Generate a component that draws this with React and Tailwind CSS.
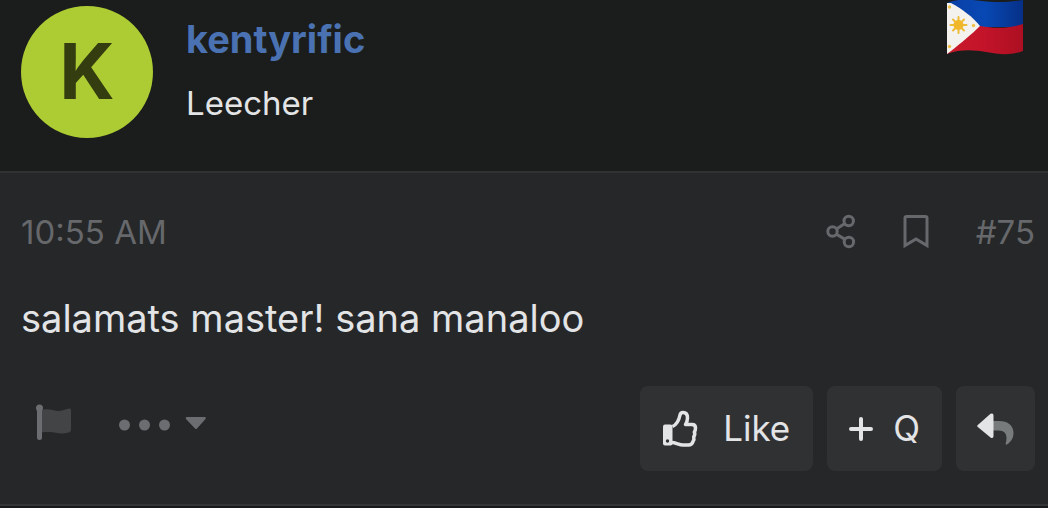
function PhilippineFlag() {
  return (
    <svg viewBox="0 0 78 56" className="h-14 w-[78px] shrink-0" role="img" aria-label="Philippines">
      <defs>
        <linearGradient id="flag-blue" x1="0" x2="1" y1="0" y2="0">
          <stop offset="0" stopColor="#0a3fa5" />
          <stop offset="0.5" stopColor="#0848b4" />
          <stop offset="1" stopColor="#063087" />
        </linearGradient>
        <linearGradient id="flag-red" x1="0" x2="1" y1="0" y2="0">
          <stop offset="0" stopColor="#c91a2a" />
          <stop offset="0.45" stopColor="#c4142a" />
          <stop offset="1" stopColor="#ad0f22" />
        </linearGradient>
      </defs>
      <path d="M1 3C10 -1 20 -1 36 1S64 2 77 0V27H1Z" fill="url(#flag-blue)" />
      <path d="M1 27L34 26C50 29 64 28 77 24V51C64 56 52 54 40 52S14 49 1 54Z" fill="url(#flag-red)" />
      <path d="M1 3L5 3C16 9 27 17 34 26C26 34 15 43 5 51L1 54Z" fill="#f4f2ee" />
      <path d="M12.500 17V33M4.500 25H20.500M7 19.500L18 30.500M18 19.500L7 30.500" stroke="#eebb35" strokeWidth="2" strokeLinecap="round" />
      <circle cx="12.500" cy="25" r="5" fill="#f0b72b" />
      <circle cx="3.500" cy="7" r="1.700" fill="#efc04a" />
      <circle cx="3.500" cy="46.500" r="1.700" fill="#efc04a" />
      <circle cx="27.500" cy="25.500" r="1.700" fill="#efc04a" />
    </svg>
  );
}

function ShareIcon() {
  return (
    <svg viewBox="0 0 32 36" className="h-9 w-8" fill="none" stroke="currentColor" strokeWidth="3" aria-hidden="true">
      <circle cx="7.500" cy="17.500" r="4.700" />
      <circle cx="23.700" cy="7" r="4.700" />
      <circle cx="23.900" cy="28" r="4.700" />
      <path d="M11.500 15L19.800 9.600M11.500 20.200L20 25.400" />
    </svg>
  );
}

function BookmarkIcon() {
  return (
    <svg viewBox="0 0 26 36" className="h-9 w-[26px]" fill="none" stroke="currentColor" strokeWidth="3" aria-hidden="true">
      <path d="M2 31.500V4Q2 2.500 3.500 2.500H22.500Q24 2.500 24 4V31.500L13 25Z" />
    </svg>
  );
}

function FlagIcon() {
  return (
    <svg viewBox="0 0 36 38" className="h-[38px] w-9" aria-hidden="true">
      <path d="M5 6.500C13 3 19 8.500 26 6.500L33 4.500Q35 4 35 6V26Q35 28 32 28.800C22 31 19 26.500 5 28.500Z" fill="#434446" />
      <path d="M3.500 5V33.500" stroke="#6b6d70" strokeWidth="5" strokeLinecap="round" />
      <circle cx="3.500" cy="4" r="3.500" fill="#6b6d70" />
    </svg>
  );
}

function MoreIcon() {
  return (
    <svg viewBox="0 0 90 16" className="h-4 w-[90px]" fill="currentColor" aria-hidden="true">
      <circle cx="6.500" cy="9" r="5.500" />
      <circle cx="26.500" cy="9" r="5.500" />
      <circle cx="46.500" cy="9" r="5.500" />
      <path d="M68.500 1H87Q88.500 1.500 87.500 3L79 12.500Q78 13.500 77 12.500L68 3Q67.200 1.500 68.500 1Z" />
    </svg>
  );
}

function ThumbIcon() {
  return (
    <svg viewBox="0 0 36 38" className="h-[38px] w-9" aria-hidden="true">
      <rect x="0" y="14.500" width="9.500" height="21" rx="2" fill="currentColor" />
      <circle cx="4.500" cy="31" r="1.700" fill="#303133" />
      <path
        d="M9.500 16.500C14 14.500 16 10 17 5Q17.500 2.500 20 2.500Q24.500 2.500 24.500 8Q24.500 11 22.500 14.500H29Q32.500 14.500 32.500 18Q32.500 20.500 31.300 22Q32.500 24 30.700 27Q31.500 29.500 30 31.500Q29 35 25.500 35H20C16 35 13 32.500 8.500 32.500"
        fill="none" stroke="currentColor" strokeWidth="3.500" strokeLinejoin="round"
      />
    </svg>
  );
}

function PlusIcon() {
  return (
    <svg viewBox="0 0 24 24" className="size-6" aria-hidden="true">
      <path d="M12 2V22M2 12H22" fill="none" stroke="currentColor" strokeWidth="4" strokeLinecap="round" />
    </svg>
  );
}

function ReplyIcon() {
  return (
    <svg viewBox="0 0 37 32" className="h-8 w-[37px]" aria-hidden="true">
      <path d="M16 8H22C31 8 36.500 12.500 36.500 20C36.500 25 34 29 30 31.500Q28.500 32 28.700 30.500C31 22 28.500 17.500 21 17.500H16Z" fill="#777b7c" />
      <path d="M.8 12L13.500 .8Q16.500 -.5 16.500 2.500V23Q16.500 26 13.500 24.500L.8 14Q-.4 13 .8 12Z" fill="currentColor" />
    </svg>
  );
}

export default function App() {
  return (
    <article className="bg-[#252729] font-['Inter',sans-serif] text-[#e3e4e6]">
      <header className="flex items-start border-b-2 border-[#313333] bg-[#1b1d1c] pt-1.5 pr-6 pb-[33px] pl-[21px]">
        <a href="#profile" aria-label="kentyrific's profile" className="flex size-[132px] shrink-0 items-center justify-center rounded-full bg-[#adcc33] pb-0.5 text-[77px] leading-none font-bold text-[#333d0f]">
          K
        </a>
        <div className="ml-[33px] min-w-0 grow pt-2">
          <h2 className="text-[38px] leading-[50px] font-bold text-[#4a72b2]">
            <a href="#profile">kentyrific</a>
          </h2>
          <p className="mt-[19px] text-[33px] leading-[40px]">Leecher</p>
        </div>
        <div className="-mt-1.5">
          <PhilippineFlag />
        </div>
      </header>

      <div className="border-b-2 border-[#343537] pt-[39px] pb-[33px]">
        <div className="flex items-center justify-between pr-[13px] pl-[21px] text-[33px] leading-[40px] text-[#66686b]">
          <a href="#post"><time>10:55 AM</time></a>
          <div className="flex items-center">
            <button type="button" aria-label="Share"><ShareIcon /></button>
            <button type="button" aria-label="Bookmark" className="ml-[46px]"><BookmarkIcon /></button>
            <a href="#post" className="ml-[47px]">#75</a>
          </div>
        </div>

        <p className="mt-10 px-[21px] text-[38px] leading-[52px]">salamats master! sana manaloo</p>

        <footer className="mt-[42px] flex items-center justify-between pr-[13px] pl-9 text-[35px]">
          <div className="flex items-center gap-[46px] text-[#6b6d70]">
            <button type="button" aria-label="Report" className="-mt-3"><FlagIcon /></button>
            <button type="button" aria-label="More options" className="-mt-2.5"><MoreIcon /></button>
          </div>
          <div className="flex gap-[14px]">
            <button type="button" className="flex h-[85px] items-center gap-6 rounded-lg bg-[#303133] px-[23px]">
              <ThumbIcon />
              Like
            </button>
            <button type="button" aria-label="Quote" className="flex h-[85px] items-center gap-5 rounded-lg bg-[#303133] px-[22px]">
              <PlusIcon />
              Q
            </button>
            <button type="button" aria-label="Reply" className="flex h-[85px] items-center rounded-lg bg-[#303133] px-[21px]">
              <ReplyIcon />
            </button>
          </div>
        </footer>
      </div>
      <div className="h-0.5 bg-[#18191a]" />
    </article>
  );
}
